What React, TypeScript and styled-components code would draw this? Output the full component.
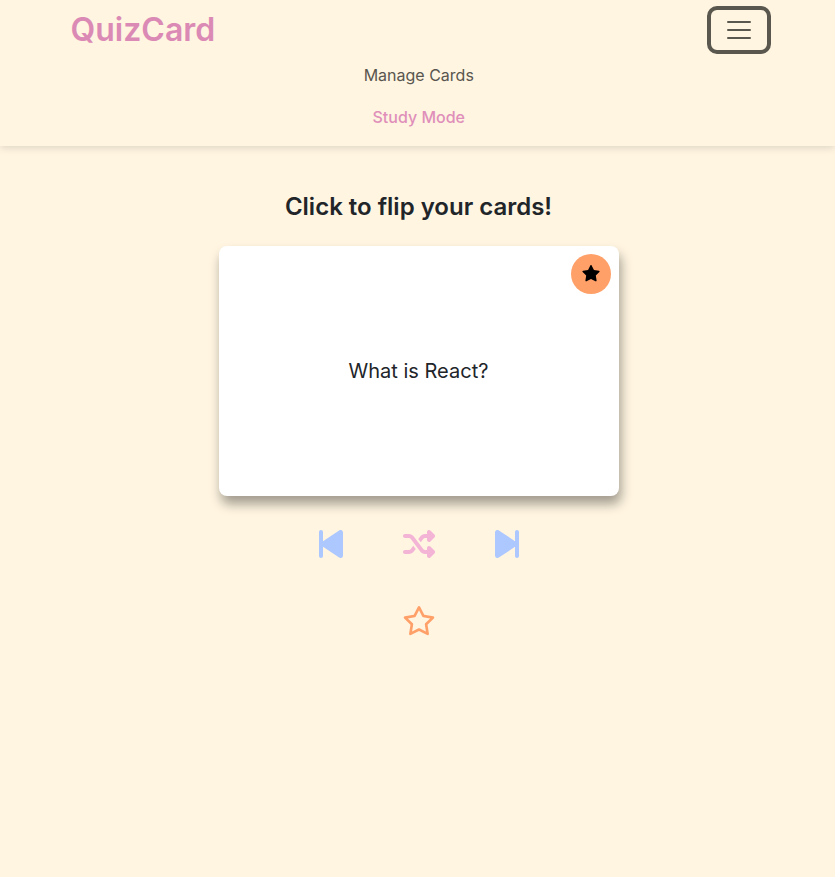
import React from "react";
import styled, { createGlobalStyle } from "styled-components";
import { FaShuffle } from "react-icons/fa6";

const GlobalStyle = createGlobalStyle`
  * { box-sizing: border-box; }
  body { margin: 0; min-height: 100vh; background: #fff5e1; color: #212529; font: 400 16px/1.5 Inter, sans-serif; }
  button { font: inherit; cursor: pointer; }
`;

const Navbar = styled.nav`
  height: 146px;
  padding: 6px 64px 8px 70.5px;
  box-shadow: 0 2px 8px rgba(0, 0, 0, 0.13);
`;
const NavTop = styled.div`
  display: flex;
  height: 48px;
  align-items: center;
  justify-content: space-between;
`;
const Brand = styled.a`
  color: #db8ab5;
  font-size: 32px;
  font-weight: 600;
`;
const Toggler = styled.button`
  display: flex;
  align-items: center;
  justify-content: center;
  width: 64px;
  height: 48px;
  padding: 0;
  background: transparent;
  border: 4px solid #5a574e;
  border-radius: 10px;
`;
const NavLinks = styled.div`
  display: flex;
  flex-direction: column;
  align-items: center;
  gap: 2px;
  margin: 1px 0 0 -4px;
`;
const NavLink = styled.a<{ $active?: boolean }>`
  padding: 8px;
  font-weight: ${(p) => (p.$active ? 500 : 400)};
  color: ${(p) => (p.$active ? "#e08fba" : "#59564f")};
`;
const Main = styled.main`
  display: flex;
  flex-direction: column;
  align-items: center;
  padding: 46px 0 0 3px;
`;
const Heading = styled.h1`
  margin: 0 1px 25px 0;
  font-size: 24px;
  line-height: 29px;
  font-weight: 600;
`;
const Card = styled.section`
  position: relative;
  display: flex;
  align-items: center;
  justify-content: center;
  width: 400px;
  height: 250px;
  background: #fff;
  border-radius: 8px;
  font-size: 20px;
  box-shadow: 2px 8px 12px rgba(0, 0, 0, 0.37);
`;
const Question = styled.p`
  margin: 0 1px 0 0;
`;
const StarBadge = styled.button`
  position: absolute;
  top: 8px;
  right: 8px;
  display: flex;
  align-items: center;
  justify-content: center;
  width: 40px;
  height: 40px;
  padding: 0;
  border: 0;
  border-radius: 50%;
  background: #ffa069;
  color: #000;
`;
const Controls = styled.div`
  display: flex;
  gap: 60px;
  margin-top: 32px;
`;
const IconButton = styled.button<{ $color: string }>`
  display: flex;
  padding: 0;
  border: 0;
  background: none;
  color: ${(p) => p.$color};
`;
const StepIcon = styled.svg<{ $forward?: boolean }>`
  width: 24px;
  height: 32px;
  transform: ${(p) => (p.$forward ? "scaleX(-1)" : "none")};
`;
const StarSvg = styled.svg<{ $size: number }>`
  width: ${(p) => p.$size}px;
  height: ${(p) => p.$size}px;
  overflow: visible;
`;
const Favorites = styled.div`
  margin-top: 46px;
`;

const Step = ({ forward }: { forward?: boolean }) => (
  <StepIcon $forward={forward} viewBox="0 0 384 512" fill="currentColor">
    <path d="M363 36.8c-12.9-7.2-28.8-6.3-41 1.8L64 210.6V64c0-17.7-14.3-32-32-32S0 46.3 0 64v384c0 17.7 14.3 32 32 32s32-14.3 32-32V301.4l258.1 172c12.3 8.2 28 9.1 41 1.8s21-20.7 21-35.4V72.2c0-14.8-8.1-28.2-21-35.4z" />
  </StepIcon>
);

const starOutline =
  "M288.1-32c9 0 17.3 5.1 21.4 13.1L383 125.3 542.9 150.7c8.9 1.4 16.3 7.7 19.1 16.3s.5 18-5.8 24.4L441.7 305.9 467 465.8c1.4 8.9-2.3 17.9-9.6 23.2s-17 6.1-25 2L288.1 417.6 143.8 491c-8 4.1-17.7 3.3-25-2s-11-14.2-9.6-23.2L134.4 305.9 20 191.4c-6.4-6.4-8.6-15.8-5.8-24.4s10.1-14.9 19.1-16.3L193.1 125.3 266.7-18.9c4.1-8 12.4-13.1 21.4-13.1z";
const starHole =
  "M288.1 44.8L230.3 158c-3.5 6.8-10 11.6-17.6 12.8l-125.5 20 89.8 89.9c5.4 5.4 7.9 13.1 6.7 20.7l-19.8 125.5 113.3-57.6c6.8-3.5 14.9-3.5 21.8 0l113.3 57.6-19.8-125.5c-1.2-7.6 1.3-15.3 6.7-20.7l89.8-89.9-125.5-20c-7.6-1.2-14.1-6-17.6-12.8z";

const Star = ({ size, hollow }: { size: number; hollow?: boolean }) => (
  <StarSvg $size={size} viewBox="0 0 576 512" fill="currentColor" fillRule="evenodd">
    <path d={hollow ? `${starOutline} ${starHole}` : starOutline} />
  </StarSvg>
);

export default function App() {
  return (
    <>
      <GlobalStyle />
      <Navbar>
        <NavTop>
          <Brand>QuizCard</Brand>
          <Toggler aria-label="Toggle navigation">
            <svg width="30" height="30" viewBox="0 0 30 30" fill="none">
              <path d="M4 7h22M4 15h22M4 23h22" stroke="#5a574e" strokeWidth="2" strokeLinecap="round" />
            </svg>
          </Toggler>
        </NavTop>
        <NavLinks>
          <NavLink>Manage Cards</NavLink>
          <NavLink $active>Study Mode</NavLink>
        </NavLinks>
      </Navbar>
      <Main>
        <Heading>Click to flip your cards!</Heading>
        <Card>
          <Question>What is React?</Question>
          <StarBadge aria-label="Star card"><Star size={18} /></StarBadge>
        </Card>
        <Controls>
          <IconButton $color="#adc8ff" aria-label="Previous"><Step /></IconButton>
          <IconButton $color="#f3b4d6" aria-label="Shuffle"><FaShuffle size={32} /></IconButton>
          <IconButton $color="#adc8ff" aria-label="Next"><Step forward /></IconButton>
        </Controls>
        <Favorites>
          <IconButton $color="#ffa069" aria-label="Starred only"><Star size={32} hollow /></IconButton>
        </Favorites>
      </Main>
    </>
  );
}
